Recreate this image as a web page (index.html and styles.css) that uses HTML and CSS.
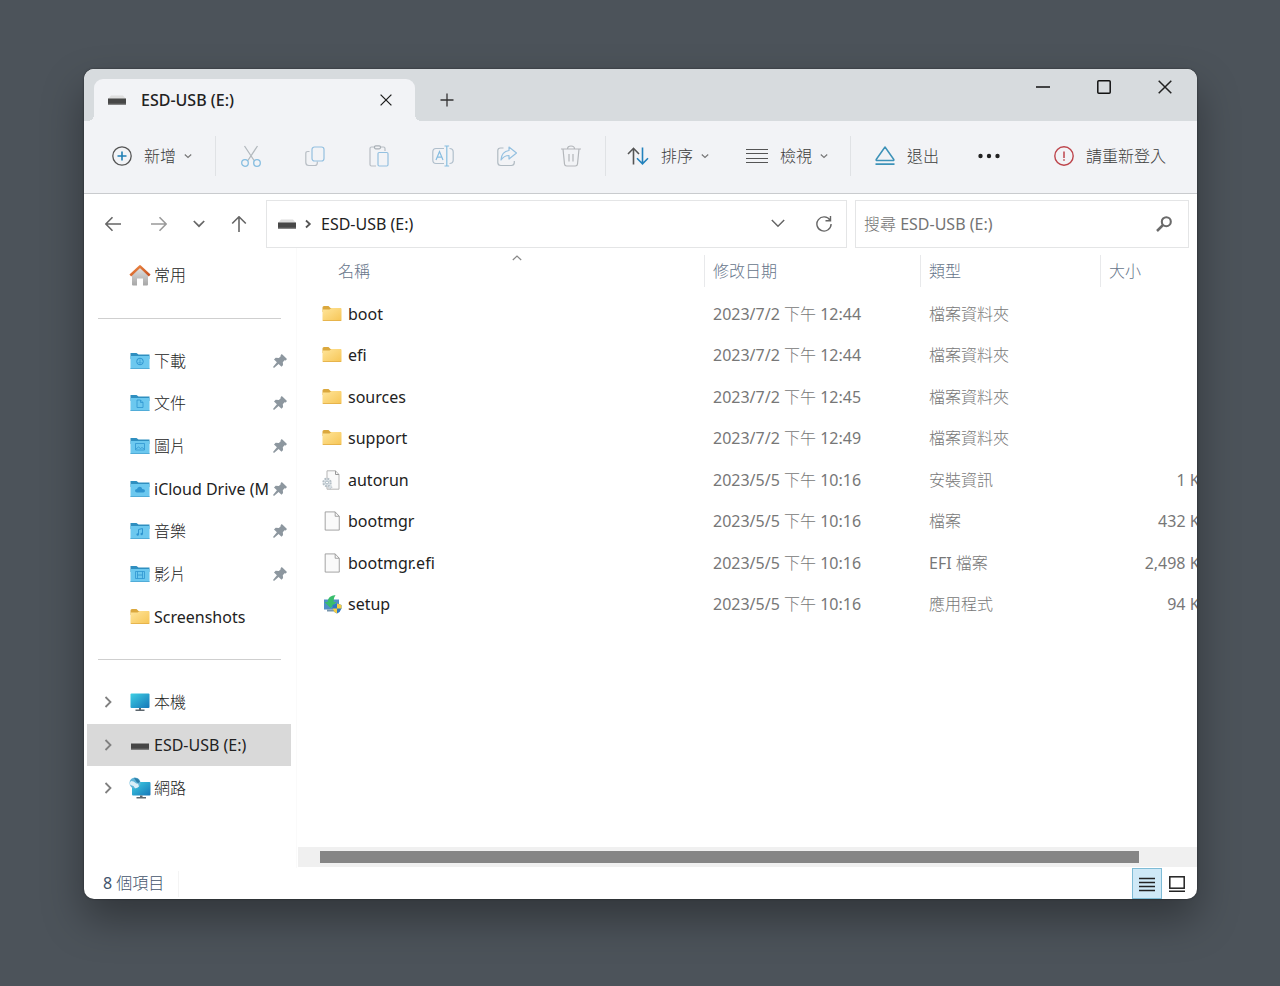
FILE: index.html
```html
<!DOCTYPE html>
<html lang="zh-Hant">
<head>
<meta charset="utf-8">
<meta name="viewport" content="width=device-width, initial-scale=1">
<title>ESD-USB (E:)</title>
<link rel="stylesheet" href="styles.css">
</head>
<body>
<svg class="defs" aria-hidden="true">
  <defs>
    <linearGradient id="g-yellow" x1="0" y1="0" x2="1" y2="1"><stop offset="0" stop-color="#ffe59a"/><stop offset="1" stop-color="#f6c555"/></linearGradient>
    <linearGradient id="g-screen" x1="0" y1="0" x2="1" y2="1"><stop offset="0" stop-color="#3fd0e4"/><stop offset="1" stop-color="#1576b8"/></linearGradient>
    <linearGradient id="g-wall" x1="0" y1="0" x2="0" y2="1"><stop offset="0" stop-color="#e3e3e3"/><stop offset="1" stop-color="#a6a6a6"/></linearGradient>
    <linearGradient id="g-roof" x1="0" y1="0" x2="1" y2="1"><stop offset="0" stop-color="#f08a45"/><stop offset="1" stop-color="#c4501f"/></linearGradient>
  </defs>
  <symbol id="drive" viewBox="0 0 20 20"><path d="M4 5.500h12l3 3.500H1z" fill="#dedede"/><path d="M1 8.500h18v6H1z" fill="#474747"/><path d="M1 13.500h18v1H1z" fill="#6a6a6a"/></symbol>
  <symbol id="folder" viewBox="0 0 20 20"><path d="M.5 3.500q0-1.500 1.500-1.500h4.500L8.500 4H19v4H.5z" fill="#dba83d"/><path d="M.5 5.500h7l2-1.500h9q1 0 1 1v11q0 1-1 1h-17q-1 0-1-1z" fill="url(#g-yellow)"/><path d="M.8 16.500h18.400" stroke="#e2ad45" stroke-width=".8"/></symbol>
  <symbol id="bluefolder" viewBox="0 0 20 20"><path d="M.5 2h6l2 1.500h11V8H.5z" fill="#2f8fc0"/><path d="M.5 5h19v12.500q0 .5-.5.5H1q-.5 0-.5-.5z" fill="#6cc8ef"/><path d="M.5 17.500h19" stroke="#4aa5d2" stroke-width=".8"/></symbol>
  <symbol id="pin" viewBox="0 0 14 14"><path d="M8.800 0L14 5l-1.300 1.400-1.200-.1-1.700 1.900.3 2.800-1.600 1.700-2.900-2.800L1 14 0 13l3.900-4.800L1 5.400l1.700-1.700 3.200.3L7.700 2.300l-.1-1.100z" fill="#8d979f"/></symbol>
  <symbol id="chev-r" viewBox="0 0 14 14"><path d="M4.500 2L9.500 7l-5 5" fill="none" stroke="#808080" stroke-width="1.800"/></symbol>
  <symbol id="chev-d" viewBox="0 0 8 8"><path d="M.8 2.500L4 5.500l3.200-3" fill="none" stroke="#777" stroke-width="1.200"/></symbol>
  <symbol id="page" viewBox="0 0 20 22"><path d="M2.500 1H13.500l4.500 4.800V21H2.500z" fill="#fafafa" stroke="#9a9a9a"/><path d="M13.500 1v4.800H18" fill="none" stroke="#9a9a9a"/></symbol>
  <symbol id="x" viewBox="0 0 14 14"><path d="M.7 .7l12.600 12.600M13.300 .7L.7 13.300" fill="none" stroke="#222" stroke-width="1.500"/></symbol>
</svg>

<main class="window">
  <header class="titlebar">
    <div class="tab">
      <svg class="i20"><use href="#drive"/></svg>
      <span class="tab-title">ESD-USB (E:)</span>
      <button class="bare" aria-label="關閉分頁"><svg class="i12"><use href="#x"/></svg></button>
    </div>
    <button class="bare new-tab" aria-label="新增分頁"><svg class="i14" viewBox="0 0 14 14"><path d="M7 .5v13M.5 7h13" stroke="#333" stroke-width="1.300"/></svg></button>
    <div class="controls">
      <button class="bare" aria-label="最小化"><svg class="i14" viewBox="0 0 14 14"><path d="M0 7h14" stroke="#111" stroke-width="1.500"/></svg></button>
      <button class="bare" aria-label="最大化"><svg class="i14" viewBox="0 0 14 14"><rect x=".8" y=".8" width="12.400" height="12.400" rx="1" fill="none" stroke="#111" stroke-width="1.500"/></svg></button>
      <button class="bare" aria-label="關閉"><svg class="i14"><use href="#x"/></svg></button>
    </div>
  </header>

  <div class="toolbar" role="toolbar">
    <button class="tool new"><svg class="i20" viewBox="0 0 20 20" fill="none"><circle cx="10" cy="10" r="9.200" stroke="#555" stroke-width="1.300"/><path d="M10 5.500v9M5.500 10h9" stroke="#1f7fb5" stroke-width="1.600"/></svg><span>新增</span><svg class="i8"><use href="#chev-d"/></svg></button>
    <span class="rule"></span>
    <button class="tool icon" aria-label="剪下"><svg class="i22" viewBox="0 0 22 22" fill="none" stroke-width="1.300"><path d="M4.500 1l9.600 14.500M17.500 1L7.900 15.500" stroke="#b3b9be"/><circle cx="5" cy="18" r="3.300" stroke="#86bde0"/><circle cx="17" cy="18" r="3.300" stroke="#86bde0"/></svg></button>
    <button class="tool icon" aria-label="複製"><svg class="i22" viewBox="0 0 22 22" fill="none" stroke-width="1.200"><path d="M5.500 6.500H3.800Q1.800 6.500 1.800 8.500v9q0 3 3 3h6q2.500 0 2.500-2.500v-1.500" stroke="#b7bdc4"/><rect x="8" y="2" width="12" height="14" rx="2.500" stroke="#94c0e0"/></svg></button>
    <button class="tool icon" aria-label="貼上"><svg class="i22" viewBox="0 0 22 22" fill="none" stroke-width="1.200"><path d="M8 21H3.500q-1.500 0-1.500-1.500v-16Q2 2 3.500 2h3M12.500 2h3Q17 2 17 3.500V6" stroke="#b7bdc4"/><rect x="6.500" y=".8" width="6" height="3" rx="1.200" stroke="#a9b0b6"/><rect x="10" y="7.500" width="10" height="13.500" rx="1.200" stroke="#94c0e0"/></svg></button>
    <button class="tool icon" aria-label="重新命名"><svg class="i22" viewBox="0 0 22 22" fill="none" stroke-width="1.200"><path d="M12 18.500H4Q.8 18.500.8 15V7Q.8 3.500 4 3.500h8M17.500 3.500q3.700 0 3.700 3.500v8q0 3.500-3.700 3.500" stroke="#b0bfcc"/><path d="M4 15L7.500 6.500 11 15M5.200 12.200h4.600M14.800 1.500v19M12.500 1h4.600M12.500 21h4.600" stroke="#86bde0"/></svg></button>
    <button class="tool icon" aria-label="共用"><svg class="i22" viewBox="0 0 22 22" fill="none" stroke-width="1.200"><path d="M7.500 3H4.500Q1.800 3 1.800 5.500v12q0 3 3 3h10.500q3 0 3-3V16" stroke="#b0bac2"/><path d="M13 2l7.500 6L13 14v-3.500Q8 10.500 5 15q.5-8.500 8-9.500z" stroke="#94c0e0" stroke-linejoin="round"/></svg></button>
    <button class="tool icon" aria-label="刪除"><svg class="i22" viewBox="0 0 22 22" fill="none" stroke="#b3b6ba" stroke-width="1.200"><path d="M1 4h20M7.500 4q0-3 3.500-3t3.500 3M3 4l1.500 15q.2 2 2.200 2h8.600q2 0 2.200-2L19 4M9 9v7.500M13 9v7.500"/></svg></button>
    <span class="rule"></span>
    <button class="tool sort"><svg class="i22" viewBox="0 0 22 22" fill="none" stroke-width="1.600"><path d="M6.500 19.500V3.500M1 9l5.500-5.700L12 9" stroke="#555"/><path d="M15.500 2.500v16M10 13.300l5.500 5.500 5.500-5.500" stroke="#2382bd"/></svg><span>排序</span><svg class="i8"><use href="#chev-d"/></svg></button>
    <button class="tool view"><svg class="i22" viewBox="0 0 22 22"><path d="M0 4.500h22M0 8.500h22M0 13.500h22M0 17.500h22" stroke="#555" stroke-width="1.200"/></svg><span>檢視</span><svg class="i8"><use href="#chev-d"/></svg></button>
    <span class="rule"></span>
    <button class="tool eject"><svg class="i20" viewBox="0 0 20 20" fill="none" stroke="#3d92b8" stroke-width="1.500"><path d="M10 1L1.200 13.500q-.3 1 .8 1h16q1.100 0 .8-1z" stroke-linejoin="round"/><path d="M.5 18.200h19" stroke-width="1.800"/></svg><span>退出</span></button>
    <button class="tool more" aria-label="更多"><svg class="i22" viewBox="0 0 22 22" fill="#222"><circle cx="2.500" cy="11" r="2.200"/><circle cx="11" cy="11" r="2.200"/><circle cx="19.500" cy="11" r="2.200"/></svg></button>
    <button class="tool signin"><svg class="i20" viewBox="0 0 20 20"><circle cx="10" cy="10" r="9.200" fill="none" stroke="#bd444b" stroke-width="1.400"/><path d="M10 5.500v6.500M10 13.300v1.500" stroke="#bd444b" stroke-width="1.500"/></svg><span>請重新登入</span></button>
  </div>

  <div class="navrow">
    <div class="history">
      <button class="bare" aria-label="上一頁"><svg class="i16" viewBox="0 0 16 16" fill="none" stroke="#666" stroke-width="1.600"><path d="M16 8H1M7.500 1.200L.8 8l6.700 6.800"/></svg></button>
      <button class="bare" aria-label="下一頁"><svg class="i16" viewBox="0 0 16 16" fill="none" stroke="#999" stroke-width="1.600"><path d="M0 8h15M8.500 1.200L15.200 8l-6.700 6.800"/></svg></button>
      <button class="bare" aria-label="最近位置"><svg class="i12" viewBox="0 0 12 12" fill="none" stroke="#666" stroke-width="1.700"><path d="M.8 3L6 8.200 11.200 3"/></svg></button>
      <button class="bare" aria-label="上移"><svg class="i16" viewBox="0 0 16 16" fill="none" stroke="#666" stroke-width="1.600"><path d="M8 16V1M1.200 7.500L8 .8l6.800 6.700"/></svg></button>
    </div>
    <div class="address">
      <svg class="i20"><use href="#drive"/></svg>
      <svg class="i12 crumb" viewBox="0 0 12 12"><path d="M4 2.500L7.800 6 4 9.500" fill="none" stroke="#555" stroke-width="1.800"/></svg>
      <button class="bare path">ESD-USB (E:)</button>
      <button class="bare" aria-label="展開"><svg class="i14" viewBox="0 0 14 14" fill="none" stroke="#666" stroke-width="1.500"><path d="M.8 3L7 9.200 13.200 3"/></svg></button>
      <button class="bare refresh" aria-label="重新整理"><svg class="i16" viewBox="0 0 16 16" fill="none" stroke="#666" stroke-width="1.400"><path d="M14 4.200A7.100 7.100 0 1 0 15.100 8M14.500 0v4.800h-5"/></svg></button>
    </div>
    <label class="search">
      <input type="text" placeholder="搜尋 ESD-USB (E:)" aria-label="搜尋 ESD-USB (E:)">
      <svg class="i16" viewBox="0 0 16 16" fill="none" stroke="#6a6a6a"><circle cx="10.300" cy="5.700" r="4.500" stroke-width="2.100"/><path d="M7 9L1 15" stroke-width="2.500"/></svg>
    </label>
  </div>

  <div class="content">
    <nav class="sidebar">
      <ul class="places">
        <li><a href="#"><svg class="i22 home" viewBox="0 0 22 22"><path d="M3 10.500L11 3l8 7.500V20.500q0 1-1 1h-4V14.500H8v7H4q-1 0-1-1z" fill="url(#g-wall)"/><path d="M1.300 11.500L11 2.300l9.700 9.200" fill="none" stroke="url(#g-roof)" stroke-width="2.500" stroke-linejoin="round"/></svg><span>常用</span></a></li>
        <li class="line"></li>
        <li><a href="#"><svg class="i20" viewBox="0 0 20 20"><use href="#bluefolder"/><circle cx="10" cy="10.500" r="3.300" fill="none" stroke="#2f95d0"/><path d="M10 8.500v3.500M8.500 11l1.500 1.500 1.500-1.500" fill="none" stroke="#2f95d0" stroke-width=".7"/></svg><span>下載</span><svg class="i14"><use href="#pin"/></svg></a></li>
        <li><a href="#"><svg class="i20" viewBox="0 0 20 20"><use href="#bluefolder"/><path d="M7 7h3.500l2.500 2.500v5H7zM10.500 7v2.500H13" fill="none" stroke="#2f95d0" stroke-width=".8"/></svg><span>文件</span><svg class="i14"><use href="#pin"/></svg></a></li>
        <li><a href="#"><svg class="i20" viewBox="0 0 20 20"><use href="#bluefolder"/><path d="M5.500 7.500h9v6.500h-9zM6 13l2.500-2 2 1.500 1.500-1 2 1.500" fill="none" stroke="#2f95d0" stroke-width=".8"/></svg><span>圖片</span><svg class="i14"><use href="#pin"/></svg></a></li>
        <li><a href="#"><svg class="i20" viewBox="0 0 20 20"><use href="#bluefolder"/><path d="M7 13.500q-2-.2-2-1.800T7 10q.5-2 2.500-2.200T12.300 10q2.700 0 2.700 1.800t-2 1.700z" fill="#2f95d0"/></svg><span>iCloud Drive (M</span><svg class="i14"><use href="#pin"/></svg></a></li>
        <li><a href="#"><svg class="i20" viewBox="0 0 20 20"><use href="#bluefolder"/><path d="M8.500 13.500v-5l4-1v5.500" fill="none" stroke="#2f95d0"/><circle cx="7.700" cy="13.500" r="1.200" fill="#2f95d0"/><circle cx="11.700" cy="13" r="1.200" fill="#2f95d0"/></svg><span>音樂</span><svg class="i14"><use href="#pin"/></svg></a></li>
        <li><a href="#"><svg class="i20" viewBox="0 0 20 20"><use href="#bluefolder"/><path d="M5.500 7.500h9v7h-9zM7.500 7.500v7M12.500 7.500v7M7.500 11h5" fill="none" stroke="#2f95d0" stroke-width=".8"/></svg><span>影片</span><svg class="i14"><use href="#pin"/></svg></a></li>
        <li><a href="#"><svg class="i20"><use href="#folder"/></svg><span>Screenshots</span></a></li>
        <li class="line"></li>
        <li><a href="#"><svg class="i14 twist"><use href="#chev-r"/></svg><svg class="i20" viewBox="0 0 20 20"><rect x=".5" y="1.500" width="19" height="14.500" rx="1" fill="url(#g-screen)"/><path d="M9 16h2v2H9zM5.500 17.500h9V19h-9z" fill="#5d666d"/></svg><span>本機</span></a></li>
        <li><a href="#" class="current" aria-current="page"><svg class="i14 twist"><use href="#chev-r"/></svg><svg class="i20"><use href="#drive"/></svg><span>ESD-USB (E:)</span></a></li>
        <li><a href="#"><svg class="i14 twist"><use href="#chev-r"/></svg><svg class="i22 home" viewBox="0 0 22 22"><rect x="3" y="5" width="18.500" height="13.500" rx="1" fill="url(#g-screen)"/><path d="M11 18.500h2.500V20.500H11zM7.500 20h9.500v1.500H7.500z" fill="#5d666d"/><circle cx="6" cy="6" r="5.500" fill="#5fb4d8"/><path d="M2 4q3 0 4 1.500t3 1l1 3q-2 2-4 1.800Q5 8.500 3 8.500T.6 6z" fill="#d9eff8"/><path d="M5 .7l4 1 2 3-2 1.500-2-2z" fill="#2d7ea8"/></svg><span>網路</span></a></li>
      </ul>
    </nav>
    <section class="files">
      <svg class="sortmark" viewBox="0 0 10 6"><path d="M.8 5L5 1l4.200 4" fill="none" stroke="#888" stroke-width="1.200"/></svg>
      <table>
        <colgroup><col><col class="c-date"><col class="c-type"><col class="c-size"></colgroup>
        <thead><tr><th scope="col"><span>名稱</span></th><th scope="col"><span>修改日期</span></th><th scope="col"><span>類型</span></th><th scope="col"><span>大小</span></th></tr></thead>
        <tbody>
          <tr><td><div class="file"><svg class="i20"><use href="#folder"/></svg>boot</div></td><td>2023/7/2 下午 12:44</td><td>檔案資料夾</td><td></td></tr>
          <tr><td><div class="file"><svg class="i20"><use href="#folder"/></svg>efi</div></td><td>2023/7/2 下午 12:44</td><td>檔案資料夾</td><td></td></tr>
          <tr><td><div class="file"><svg class="i20"><use href="#folder"/></svg>sources</div></td><td>2023/7/2 下午 12:45</td><td>檔案資料夾</td><td></td></tr>
          <tr><td><div class="file"><svg class="i20"><use href="#folder"/></svg>support</div></td><td>2023/7/2 下午 12:49</td><td>檔案資料夾</td><td></td></tr>
          <tr><td><div class="file"><svg class="i20" viewBox="0 0 20 20"><path d="M5 .8h8.500L17 4.500v14.700H5z" fill="#fafafa" stroke="#b5b5b5"/><path d="M13.500.8v3.700H17" fill="none" stroke="#999"/><circle cx="5" cy="12.500" r="3.700" fill="#e4eaee" stroke="#b4bec5" stroke-width="2" stroke-dasharray="1.800 1.100"/><circle cx="5" cy="12.500" r="1.500" fill="#fff" stroke="#93a4b0" stroke-width=".8"/><circle cx="8" cy="17" r="1.800" fill="#d7dee3" stroke="#b4bec5" stroke-dasharray="1 .7"/></svg>autorun</div></td><td>2023/5/5 下午 10:16</td><td>安裝資訊</td><td>1 KB</td></tr>
          <tr><td><div class="file"><svg class="i20" viewBox="0 0 20 22"><use href="#page"/></svg>bootmgr</div></td><td>2023/5/5 下午 10:16</td><td>檔案</td><td>432 KB</td></tr>
          <tr><td><div class="file"><svg class="i20" viewBox="0 0 20 22"><use href="#page"/></svg>bootmgr.efi</div></td><td>2023/5/5 下午 10:16</td><td>EFI 檔案</td><td>2,498 KB</td></tr>
          <tr><td><div class="file"><svg class="i20" viewBox="0 0 20 20"><path d="M2 5.500h15v10H2z" fill="#4f8fc8"/><path d="M5 17.500h8v-2H5z" fill="#7896ad"/><path d="M13.500 1Q6 1.500 5.500 8H2.500l6 6 6-6h-3Q11.500 3.500 13.500 1z" fill="#38bd6c"/><path d="M15 9.500l4.500 1.500v3.500q-1 3.500-4.500 5-3.500-1.500-4.500-5V11z" fill="#2e78c2"/><path d="M15 9.500l4.500 1.500v3.500H15zM15 14.500v5q-3.500-1.500-4.500-5z" fill="#f6cf45"/></svg>setup</div></td><td>2023/5/5 下午 10:16</td><td>應用程式</td><td>94 KB</td></tr>
        </tbody>
      </table>
      <div class="scrollbar"><div class="thumb"></div></div>
    </section>
  </div>

  <footer class="status">
    <span class="count">8 個項目</span>
    <button class="mode on" aria-label="詳細資料" aria-pressed="true"><svg class="i18" viewBox="0 0 18 18"><path d="M1 3.500h16M1 7.500h16M1 11.500h16M1 15.500h16" stroke="#222" stroke-width="1.400"/></svg></button>
    <button class="mode" aria-label="大圖示"><svg class="i18" viewBox="0 0 18 18"><rect x="1.800" y="1.800" width="14.400" height="11.400" fill="none" stroke="#222" stroke-width="1.500"/><path d="M1 16.300h16" stroke="#222" stroke-width="1.500"/></svg></button>
  </footer>
</main>
</body>
</html>
```
FILE: styles.css
```css
* { box-sizing: border-box; }

body {
  margin: 0;
  min-height: 100vh;
  display: flex;
  padding: 69px 83px 87px 84px;
  background: #4c535a;
  font-family: "Noto Sans", "Noto Sans CJK TC Light", "Noto Sans CJK TC", sans-serif;
  font-size: 16px;
  line-height: 24px;
  color: #222;
}

.defs { position: absolute; width: 0; height: 0; }

svg { display: block; flex: none; }
.i8 { width: 8px; height: 8px; }
.i12 { width: 12px; height: 12px; }
.i14 { width: 14px; height: 14px; }
.i16 { width: 16px; height: 16px; }
.i18 { width: 18px; height: 18px; }
.i20 { width: 20px; height: 20px; }
.i22 { width: 22px; height: 22px; }

button {
  margin: 0;
  padding: 0;
  border: 0;
  background: none;
  font: inherit;
  color: inherit;
}

.bare {
  display: flex;
  align-items: center;
  justify-content: center;
}

.window {
  flex: 1;
  min-width: 0;
  display: flex;
  flex-direction: column;
  overflow: hidden;
  border-radius: 10px;
  background: #fff;
  box-shadow: 0 0 2px rgba(0, 0, 0, 0.5), 0 20px 40px rgba(0, 0, 0, 0.35);
}

/* Title bar */
.titlebar {
  display: flex;
  align-items: flex-end;
  height: 52px;
  padding: 0 2px 0 10px;
  background: #d7dbde;
}

.tab {
  position: relative;
  display: flex;
  align-items: center;
  width: 321px;
  height: 42px;
  padding: 0 23px 0 13px;
  border-radius: 9px 9px 0 0;
  background: #f2f3f6;
}

.tab::before,
.tab::after {
  content: "";
  position: absolute;
  bottom: 0;
  width: 6px;
  height: 6px;
}

.tab::before { right: 100%; background: radial-gradient(circle at 0 0, transparent 6px, #f2f3f6 6px); }
.tab::after { left: 100%; background: radial-gradient(circle at 100% 0, transparent 6px, #f2f3f6 6px); }

.tab-title {
  flex: 1;
  margin-left: 14px;
  font-weight: 500;
}

.new-tab { width: 64px; height: 42px; }

.controls {
  display: flex;
  align-self: flex-start;
  margin-left: auto;
}

.controls .bare { width: 61px; height: 36px; }

/* Command bar */
.toolbar {
  display: flex;
  align-items: center;
  height: 73px;
  padding: 0 31px 2px 28px;
  border-bottom: 1px solid #c9cbce;
  background: #f2f3f6;
  white-space: nowrap;
}

.tool {
  display: flex;
  align-items: center;
  color: #3c3c3c;
}

.tool span { margin-left: 12px; }
.tool .i8 { margin-left: 8px; }
.icon { width: 64px; justify-content: center; }
.rule { width: 1px; height: 40px; background: #e0e2e5; }
.new { margin-right: 23px; }
.rule + .icon { margin-left: 3px; }
.icon + .rule { margin-left: 2px; }
.sort { margin-left: 21px; }
.view { margin: 0 22px 0 37px; }
.eject { margin-left: 24px; }
.more { margin-left: 39px; }
.signin { margin-left: auto; }

/* Navigation row */
.navrow {
  display: flex;
  align-items: stretch;
  gap: 8px;
  height: 54px;
  padding: 6px 8px 0 9px;
}

.history { display: flex; }
.history .bare { width: 40px; }
.history .bare:first-child { margin-right: 6px; }

.address,
.search {
  display: flex;
  align-items: center;
  border: 1px solid #e4e5e6;
  background: #fff;
}

.address {
  flex: 1;
  margin-left: -1px;
  padding: 0 14px 0 10px;
}

.crumb { margin: 0 7px 0 5px; }
.path { flex: 1; justify-content: flex-start; }
.refresh { margin-left: 31px; }

.search {
  width: 334px;
  padding: 0 16px 0 8px;
}

.search input {
  flex: 1;
  min-width: 0;
  padding: 0;
  border: 0;
  outline: 0;
  background: none;
  font: inherit;
}

.search input::placeholder { color: #747474; opacity: 1; }

/* Body */
.content { flex: 1; display: flex; }

.sidebar {
  flex: none;
  width: 213px;
  padding: 6px 4px 0 3px;
  border-right: 1px solid #fafafa;
}

.places {
  display: grid;
  grid-auto-rows: 1fr;
  height: 555px;
  margin: 0 1px 0 0;
  padding: 0;
  list-style: none;
}

.places a {
  display: flex;
  align-items: center;
  height: 100%;
  padding: 0 4px 0 43px;
  color: #222;
  text-decoration: none;
}

.places .twist { margin: 0 15px 0 -29px; }
.places span { flex: 1; margin-left: 4px; white-space: nowrap; overflow: hidden; }
.places .home { margin: 0 -1px; }
.places .current { background: #d9d9d9; }

.line {
  align-self: center;
  height: 1px;
  margin: 0 10px 0 11px;
  background: #cfcfcf;
}

.files {
  position: relative;
  flex: 1;
  min-width: 0;
  display: flex;
  flex-direction: column;
  overflow: hidden;
}

.sortmark {
  position: absolute;
  top: 7px;
  left: 215px;
  width: 10px;
  height: 6px;
}

/* The last column runs past the right edge of the pane. */
table {
  width: calc(100% + 20px);
  height: 377px;
  table-layout: fixed;
  border-collapse: collapse;
  white-space: nowrap;
}

.c-date { width: 216px; }
.c-type { width: 180px; }
.c-size { width: 117px; }

th, td { padding: 0; text-align: left; vertical-align: middle; }

th {
  height: 45px;
  font-weight: 400;
  color: #66758a;
}

th span {
  display: block;
  padding: 4px 0 4px 8px;
  border-left: 1px solid #e8e9eb;
}

th:first-child span { padding-left: 40px; border-color: transparent; }

td { height: 41px; padding-left: 9px; color: #777; }
td:last-child { padding-right: 7px; text-align: right; }

.file {
  display: flex;
  align-items: center;
  gap: 6px;
  padding-left: 16px;
  color: #222;
}

.scrollbar {
  height: 20px;
  margin: auto 0 1px 1px;
  padding: 4px 58px 4px 22px;
  background: #f0f0f0;
}

.thumb { height: 12px; background: #858585; }

/* Status bar */
.status {
  display: flex;
  align-items: center;
  height: 31px;
  padding: 0 5px 0 19px;
}

.count {
  margin-right: auto;
  padding: 0 14px 2px 0;
  border-right: 1px solid #f4f4f4;
  color: #42536b;
}

.mode {
  display: flex;
  align-items: center;
  justify-content: center;
  width: 30px;
  height: 31px;
}

.on { border: 1px solid #7fbcd6; background: #cfe9f7; }
```
